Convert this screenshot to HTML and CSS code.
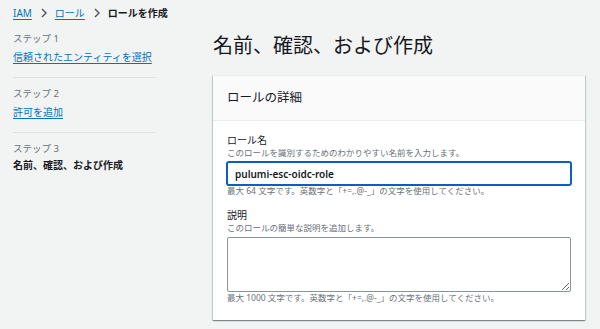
FILE: index.html
```html
<!DOCTYPE html>
<html lang="ja">
<head>
    <meta charset="UTF-8">
    <meta name="viewport" content="width=device-width, initial-scale=1.0">
    <title>ロールを作成 - IAM</title>
    <link rel="stylesheet" href="styles.css">
</head>
<body>
    <nav class="breadcrumb">
        <a href="#">IAM</a>
        <svg class="chevron" viewBox="0 0 6 10" width="6" height="10"><path d="M1 1l4 4-4 4" fill="none" stroke="#545b64" stroke-width="1.5"/></svg>
        <a href="#">ロール</a>
        <svg class="chevron" viewBox="0 0 6 10" width="6" height="10"><path d="M1 1l4 4-4 4" fill="none" stroke="#545b64" stroke-width="1.5"/></svg>
        <span class="current">ロールを作成</span>
    </nav>

    <div class="layout">
        <aside class="steps">
            <div class="step">
                <div class="step-label">ステップ 1</div>
                <a class="step-link" href="#">信頼されたエンティティを選択</a>
            </div>
            <div class="step">
                <div class="step-label">ステップ 2</div>
                <a class="step-link" href="#">許可を追加</a>
            </div>
            <div class="step active">
                <div class="step-label">ステップ 3</div>
                <div class="step-title">名前、確認、および作成</div>
            </div>
        </aside>

        <main class="content">
            <h1 class="page-title">名前、確認、および作成</h1>

            <section class="card">
                <div class="card-header">ロールの詳細</div>
                <div class="card-body">
                    <div class="field">
                        <label class="field-label" for="roleName">ロール名</label>
                        <div class="field-desc">このロールを識別するためのわかりやすい名前を入力します。</div>
                        <input class="text-input" id="roleName" type="text" value="pulumi-esc-oidc-role">
                        <div class="field-hint">最大 64 文字です。英数字と「+=,.@-_」の文字を使用してください。</div>
                    </div>
                    <div class="field">
                        <label class="field-label" for="roleDesc">説明</label>
                        <div class="field-desc">このロールの簡単な説明を追加します。</div>
                        <textarea class="text-area" id="roleDesc"></textarea>
                        <div class="field-hint">最大 1000 文字です。英数字と「+=,.@-_」の文字を使用してください。</div>
                    </div>
                </div>
            </section>
        </main>
    </div>
</body>
</html>
```

FILE: styles.css
```css
* {
    margin: 0;
    padding: 0;
    box-sizing: border-box;
}

body {
    font-family: "Noto Sans", "Noto Sans CJK JP", sans-serif;
    background: #f2f3f3;
    color: #16191f;
    width: 600px;
    height: 329px;
    overflow: hidden;
}

a {
    color: #0073bb;
}

/* breadcrumb */
.breadcrumb {
    display: flex;
    align-items: center;
    height: 20px;
    padding: 6px 0 0 13px;
    font-size: 10px;
    line-height: 14px;
}

.breadcrumb a {
    text-decoration: underline;
    text-underline-offset: 2px;
}

.breadcrumb .chevron {
    margin: 0 8px 0 9px;
}

.breadcrumb .current {
    font-weight: 700;
    color: #16191f;
}

.layout {
    display: flex;
}

/* left steps */
.steps {
    width: 156px;
    padding: 13px 0 0 13px;
}

.step {
    padding-top: 10px;
    padding-bottom: 13px;
    border-bottom: 1px solid #dfe2e2;
    font-size: 10px;
    line-height: 14px;
}

.step:first-child {
    padding-top: 0;
}

.step.active {
    border-bottom: none;
}

.step-label {
    font-size: 9.5px;
    line-height: 12px;
    color: #687078;
    margin-bottom: 5px;
}

.step-link {
    display: inline-block;
    vertical-align: top;
    text-decoration: underline;
    text-underline-offset: 2px;
}

.step-title {
    font-weight: 700;
    margin-top: -2px;
}

/* main */
.content {
    margin-left: 57px;
    width: 372px;
}

.page-title {
    font-size: 20px;
    line-height: 26px;
    font-weight: 400;
    margin-top: 13px;
    margin-bottom: 16px;
}

.card {
    background: #fff;
    border-top: 1px solid #eaeded;
    box-shadow: 0 1px 1px 0 rgba(0, 28, 36, 0.3), 1px 1px 1px 0 rgba(0, 28, 36, 0.15), -1px 1px 1px 0 rgba(0, 28, 36, 0.15);
}

.card-header {
    background: #fafafa;
    border-bottom: 1px solid #eaeded;
    padding: 14px 14px;
    font-size: 12.5px;
    line-height: 16px;
    height: 45px;
}

.card-body {
    padding: 12px 14px 16px;
}

.field + .field {
    margin-top: 11px;
}

.field-label {
    display: block;
    font-size: 10px;
    line-height: 14px;
}

.field-desc,
.field-hint {
    font-size: 8.5px;
    line-height: 12px;
    color: #687078;
}

.text-input {
    display: block;
    width: 100%;
    height: 23px;
    margin-top: 3px;
    padding: 0 7px;
    border: 1px solid #0b5fc4;
    box-shadow: 0 0 0 1px #0b5fc4;
    border-radius: 2px;
    font-family: inherit;
    font-size: 10px;
    font-weight: 600;
    color: #16191f;
    outline: none;
}

.text-area {
    display: block;
    width: 100%;
    height: 55px;
    margin-top: 3px;
    border: 1px solid #879596;
    border-radius: 2px;
    font-family: inherit;
    background: #fff;
}
```
